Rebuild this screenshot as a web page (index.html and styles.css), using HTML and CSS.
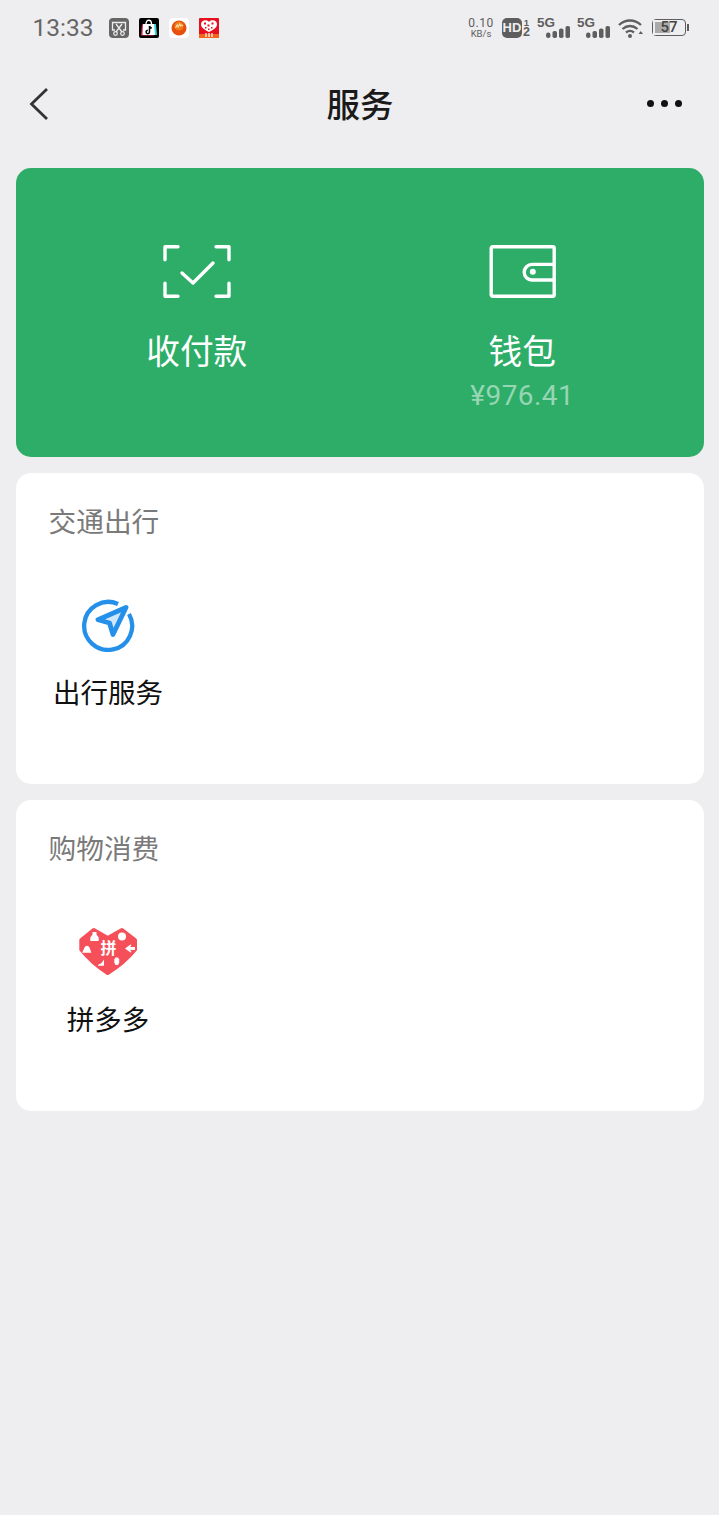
FILE: index.html
```html
<!DOCTYPE html>
<html lang="zh">
<head>
<meta charset="utf-8">
<title>服务</title>
<link rel="stylesheet" href="styles.css">
</head>
<body>
<div class="status">
  <div class="status-left">
    <span class="time">13:33</span>
    <div class="notifs">
      <svg class="notif" viewBox="0 0 20 20"><rect width="20" height="20" rx="4" fill="#666"/><path d="M6 12H3.500V4.500h13V12H14" fill="none" stroke="#eee" stroke-width="1.300"/><path d="M7 6l6 8M13 6l-6 8" fill="none" stroke="#eee" stroke-width="1.300"/><circle cx="6.500" cy="15.500" r="1.800" fill="none" stroke="#eee" stroke-width="1.200"/><circle cx="13.500" cy="15.500" r="1.800" fill="none" stroke="#eee" stroke-width="1.200"/></svg>
      <svg class="notif" viewBox="0 0 20 20"><rect width="20" height="20" rx="2" fill="#000"/><path d="M5 6h12l1 11H6z" fill="#35d5d0"/><path d="M3 6.500h11l1 11H2z" fill="#e8214f"/><path d="M4 6h11l1 11H3.500z" fill="#fff"/><path d="M7 6c0-5 5.500-5 5.500 0" fill="none" stroke="#fff" stroke-width="1.300"/><path d="M10.500 8v6a1.700 1.700 0 1 1-1.700-1.700M10.500 8c.3 1.300 1.200 2 2.300 2.100" fill="none" stroke="#000" stroke-width="1.500"/></svg>
      <svg class="notif" viewBox="0 0 20 20"><rect width="20" height="20" rx="4" fill="#fff"/><circle cx="10" cy="10" r="7.500" fill="#e84e0e"/><circle cx="10" cy="8" r="4.500" fill="#f3791a"/><path d="M6.500 10l1.700-3 1 2 1.500-3 1 2 1.300-1 .8 1" fill="none" stroke="#ffe9a8" stroke-width="1.100"/></svg>
      <svg class="notif" viewBox="0 0 20 20"><rect width="20" height="20" rx="1" fill="#e60f1d"/><rect y="16" width="20" height="4" fill="#f2651a"/><path d="M10 4C8.500 1.300 2 1.500 2 6.500c0 3 4 5.500 8 7.500 4-2 8-4.500 8-7.500C18 1.500 11.500 1.300 10 4z" fill="#fff"/><path d="M5 4.500h2v2H5zM8.500 6.500h2v2h-2zM12.500 4.500h2v2h-2zM6 9h1.500v1.500H6zM12 9h1.500v1.500H12zM9 10.500h1.500V12H9z" fill="#e60f1d"/><path d="M7 15v4M10 15v4M13 15v4" stroke="#fff" stroke-width="1.200"/></svg>
    </div>
  </div>
  <div class="status-right">
    <div class="speed"><span class="speed-top">0.10</span><span class="speed-unit">KB/s</span></div>
    <div class="hd"><span class="hd-box">HD</span><span class="hd-nums"><span class="hd-one">1</span><span class="hd-two">2</span></span></div>
    <div class="signal"><span class="five">5G</span><svg class="bars" viewBox="0 0 24 12"><rect x="0" y="6.500" width="4.500" height="5.500" rx="2.200"/><rect x="6.500" y="5" width="4.500" height="7" rx="1.800"/><rect x="13" y="2.500" width="4.500" height="9.500" rx="1.800"/><rect x="19.500" y="0" width="4.500" height="12" rx="1.800"/></svg></div>
    <div class="signal"><span class="five">5G</span><svg class="bars" viewBox="0 0 24 12"><rect x="0" y="6.500" width="4.500" height="5.500" rx="2.200"/><rect x="6.500" y="5" width="4.500" height="7" rx="1.800"/><rect x="13" y="2.500" width="4.500" height="9.500" rx="1.800"/><rect x="19.500" y="0" width="4.500" height="12" rx="1.800"/></svg></div>
    <svg class="wifi" viewBox="0 0 25 20"><path d="M1 7c6.500-6 15.500-6 22 0M4.500 11c4.500-4 10.500-4 15 0M8 14.500c2.500-2 5.500-2 8 0" fill="none" stroke="#5e5e5e" stroke-width="2.300"/><circle cx="12" cy="18" r="2" fill="#5e5e5e"/><path d="M20.500 16l4.500 0-2.200-3z" fill="#5e5e5e"/></svg>
    <div class="battery"><div class="battery-body"><div class="battery-fill"></div><span class="battery-num">57</span></div><div class="battery-cap"></div></div>
  </div>
</div>

<header class="nav">
  <svg class="back" viewBox="0 0 20 34"><path d="M18 2L2.500 17 18 32" fill="none" stroke="#333" stroke-width="2.800"/></svg>
  <h1 class="nav-title">服务</h1>
  <div class="more"><i></i><i></i><i></i></div>
</header>

<main class="content">
  <section class="hero">
    <div class="hero-item">
      <svg class="hero-icon" viewBox="0 0 68 56"><path d="M15 3.700H2v13M53 3.700h13v13M15 53.300H2v-13M53 53.300h13v-13" fill="none" stroke="#fff" stroke-width="3.400" stroke-linejoin="round" stroke-linecap="round"/><path d="M19 30l11 10 20-20" fill="none" stroke="#fff" stroke-width="3.400" stroke-linecap="round" stroke-linejoin="round"/></svg>
      <div class="hero-label">收付款</div>
    </div>
    <div class="hero-item">
      <svg class="hero-icon" viewBox="0 0 68 56"><rect x="3.200" y="3.700" width="63" height="49.600" rx="1.500" fill="none" stroke="#fff" stroke-width="3.400"/><path d="M66 21.400H44a7.800 7.800 0 0 0 0 15.600h22" fill="none" stroke="#fff" stroke-width="3.400"/><circle cx="44.800" cy="28.700" r="3" fill="#fff"/></svg>
      <div class="hero-label">钱包</div>
      <div class="hero-amount">¥976.41</div>
    </div>
  </section>

  <section class="card">
    <h2 class="card-title">交通出行</h2>
    <div class="grid">
      <div class="tile">
        <svg class="tile-icon" viewBox="0 0 60 54"><path d="M40 6A24 24 0 1 0 51 16" fill="none" stroke="#2490ea" stroke-width="4.300"/><path d="M48 9.500L20 21.800 31.500 25 35 36.500z" fill="#cfe6fb" stroke="#2490ea" stroke-width="4.800" stroke-linejoin="round"/></svg>
        <div class="tile-label">出行服务</div>
      </div>
    </div>
  </section>

  <section class="card">
    <h2 class="card-title">购物消费</h2>
    <div class="grid">
      <div class="tile">
        <svg class="tile-icon" viewBox="0 0 60 54"><path d="M15.700 5L29.700 13 44 5 57 15v9.500Q46 38 29.700 48 14 38 3.300 24.500V15z" fill="#f5505a" stroke="#f5505a" stroke-width="4" stroke-linejoin="round"/><g fill="#fff"><path d="M14.500 7h4v2.500l2.200 3V16h-8.400v-3.500l2.200-3z"/><circle cx="44" cy="11.500" r="4"/><path d="M6.500 22.500a2.700 2.700 0 0 1 5 0l1.800 5.200H4.200z"/><path d="M57 22h-5l1.500-1.800-1-.6-5.500 4 5.500 3.800 1-.6-1.500-1.800h5z"/><path d="M26 34.500l-2.500 3.500-3.500 2v.8h6z"/><path d="M37.500 32.500h2.500l1.200 2v3l-1.200 2.500h-2.500l-1.200-2.500v-3z"/></g><text class="pdd-mark" x="30.500" y="29">拼</text></svg>
        <div class="tile-label">拼多多</div>
      </div>
    </div>
  </section>
</main>
</body>
</html>
```
FILE: styles.css
```css
* { box-sizing: border-box; }
html, body { margin: 0; padding: 0; }
body {
  width: 719px;
  height: 1515px;
  overflow: hidden;
  background: #eeedef;
  font-family: "Noto Sans CJK SC", "Noto Sans", sans-serif;
  color: #111;
}
.status {
  height: 55px;
  display: flex;
  justify-content: space-between;
  align-items: center;
  padding: 0 30px 0 32.500px;
  color: #5e5e5e;
}
.status-left { display: flex; align-items: center; gap: 15px; }
.time { font: 400 24.500px/28px Roboto, sans-serif; color: #666; }
.notifs { display: flex; gap: 10px; }
.notif { width: 20px; height: 20px; display: block; }
.status-right { display: flex; align-items: center; }
.speed { width: 26px; display: flex; flex-direction: column; align-items: center; font-family: Roboto, sans-serif; margin-right: 8px; }
.speed-top { font-size: 12px; line-height: 12px; letter-spacing: .5px; }
.speed-unit { font-size: 9.500px; line-height: 9px; }
.hd { display: flex; align-items: center; width: 29px; margin-right: 6px; }
.hd-box { width: 20px; height: 20px; border-radius: 5px; background: #5e5e5e; color: #eee; font: 700 13px/20px "Liberation Sans", sans-serif; text-align: center; }
.hd-nums { display: flex; flex-direction: column; width: 9px; font-family: "Liberation Sans", sans-serif; font-weight: 700; text-align: center; }
.hd-one { font-size: 9.500px; line-height: 9px; }
.hd-two { font-size: 12.500px; line-height: 11px; }
.signal { position: relative; width: 33px; height: 20px; margin-right: 7px; }
.five { position: absolute; left: 0; top: -1px; font: 700 13.500px/12px "Liberation Sans", sans-serif; }
.bars { position: absolute; right: 0; bottom: 0; width: 24px; height: 12px; fill: #5e5e5e; }
.wifi { width: 25px; height: 20px; margin-left: 1px; margin-right: 9px; }
.battery { display: flex; align-items: center; }
.battery-body { position: relative; width: 34px; height: 17px; border: 1.500px solid #5e5e5e; border-radius: 4px; }
.battery-fill { width: 60%; height: 100%; background: #aaa; border: 2px solid #eeedef; }
.battery-num { position: absolute; inset: 0; text-align: center; font: 500 15px/14px Roboto, sans-serif; color: #444; }
.battery-cap { width: 2px; height: 7px; margin-left: 1px; background: #5e5e5e; }

.nav {
  height: 97px;
  display: flex;
  align-items: center;
  justify-content: space-between;
  padding: 0 37px 0 29px;
  position: relative;
}
.back { width: 20px; height: 34px; display: block; }
.nav-title {
  margin: 0 0 2px;
  position: absolute;
  left: 1px;
  right: 0;
  text-align: center;
  font-size: 33.500px;
  line-height: 44px;
  font-weight: 500;
  color: #1a1a1a;
  pointer-events: none;
}
.more { display: flex; gap: 7px; }
.more i { display: block; width: 7px; height: 7px; border-radius: 50%; background: #111; }

.content { padding: 16px 15px 0 16px; display: flex; flex-direction: column; gap: 16px; }
.hero {
  height: 289px;
  background: #2dad68;
  border-radius: 15px;
  padding: 75px 19px 0 18px;
  display: grid;
  grid-template-columns: 1fr 1fr;
}
.hero-item { display: flex; flex-direction: column; align-items: center; }
.hero-icon { width: 68px; height: 56px; display: block; }
.hero-label { margin-top: 28.500px; font-size: 33.700px; line-height: 44px; color: #fff; font-weight: 400; }
.hero-amount { margin-top: 6.500px; font: 400 28px/36px Roboto, sans-serif; letter-spacing: .45px; color: rgba(255, 255, 255, .5); }

.card {
  height: 311px;
  background: #fff;
  border-radius: 15px;
  padding: 27px 0 0;
}
.card-title { margin: 0; padding-left: 32.500px; font-size: 27.700px; line-height: 40px; font-weight: 400; color: #7a7a7a; }
.grid { display: grid; grid-template-columns: repeat(auto-fill, 184px); margin-top: 58px; }
.tile { display: flex; flex-direction: column; align-items: center; }
.tile-icon { width: 60px; height: 54px; display: block; }
.tile-label { margin-top: 19px; font-size: 27.500px; line-height: 40px; color: #111; }
.pdd-mark { font-size: 16px; font-weight: 700; fill: #fff; text-anchor: middle; }
```
